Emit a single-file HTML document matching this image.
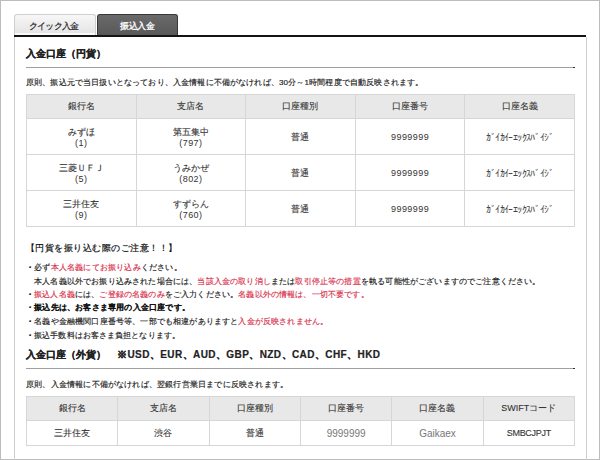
<!DOCTYPE html>
<html lang="ja">
<head>
<meta charset="utf-8">
<style>
html,body{margin:0;padding:0;}
body{width:600px;height:460px;position:relative;overflow:hidden;background:#fff;font-family:"Liberation Sans",sans-serif;color:#333;}
.frame{position:absolute;left:0;top:0;width:598px;height:458px;border:1px solid #bdbdbd;}
.abs{position:absolute;white-space:nowrap;}
.tab{position:absolute;top:14px;height:21px;border-radius:3px 3px 0 0;box-sizing:border-box;text-align:center;font-size:8px;line-height:22px;}
.tab1{left:14px;width:82px;border:1px solid #cfcfcf;border-bottom:none;background:linear-gradient(#f7f7f7,#e3e3e3);color:#222;font-size:9px;letter-spacing:-0.75px;-webkit-text-stroke-width:0.15px;padding-right:3px;box-shadow:inset 0 -2px 0 #f9f9f9;}
.tab2{left:97px;width:81px;border:1px solid #383838;border-bottom:none;background:linear-gradient(#6a6a6a,#585858);color:#fff;font-size:9px;letter-spacing:-0.4px;-webkit-text-stroke-width:0.3px;}
.topline{position:absolute;left:14px;top:35px;width:572px;height:2px;background:#141414;}
.box{position:absolute;left:14px;top:37px;width:571px;height:430px;border-left:1px solid #cfcfcf;border-right:1px solid #cfcfcf;}
h2{-webkit-text-stroke-width:0.2px;position:absolute;margin:0;font-size:10px;font-weight:bold;color:#222;line-height:12px;white-space:nowrap;}
.hr{position:absolute;left:26px;width:549px;height:1px;background:#a0a0a0;}
.txt{-webkit-text-stroke-width:0.15px;position:absolute;font-size:8px;line-height:12px;white-space:nowrap;color:#1a1a1a;letter-spacing:0.2px;}
table{position:absolute;left:26px;width:549px;border-collapse:collapse;table-layout:fixed;font-size:9px;}
.n{font-size:9px;letter-spacing:0.45px;-webkit-text-stroke-width:0;}
.l2{padding-top:2px;}
td,th{-webkit-text-stroke-width:0.1px;border:1px solid #d6d6d6;text-align:center;font-weight:normal;padding:0;line-height:11px;color:#333;}
th{background:#e8e8e8;}
td.kk{color:#444;-webkit-text-stroke-width:0;font-size:10px;letter-spacing:-0.6px;padding-top:1px;}
.b{-webkit-text-stroke-width:0.6px;color:#111;}
.red{color:#d8304c;}
.gray{color:#777;}
</style>
</head>
<body>
<div class="frame"></div>
<div class="tab tab1">クイック入金</div>
<div class="tab tab2">振込入金</div>
<div class="box"></div>
<div class="topline"></div>

<h2 style="left:26px;top:48px;">入金口座（円貨）</h2>
<div class="hr" style="top:67px;"></div>
<div class="abs" style="left:573px;top:67px;width:2px;height:1px;background:#333;"></div>
<div class="txt" style="left:26px;top:77px;letter-spacing:0.16px;">原則、振込元で当日扱いとなっており、入金情報に不備がなければ、30分～1時間程度で自動反映されます。</div>

<table style="top:94px;">
<tr style="height:24px;"><th>銀行名</th><th>支店名</th><th>口座種別</th><th>口座番号</th><th>口座名義</th></tr>
<tr style="height:36px;"><td class="l2">みずほ<br><span class="n">(1)</span></td><td class="l2">第五集中<br><span class="n">(797)</span></td><td style="padding-top:1px">普通</td><td class="n" style="padding-top:1px">9999999</td><td class="kk">ｶﾞｲｶｲｰｴｯｸｽﾊﾞｲｼﾞ</td></tr>
<tr style="height:36px;"><td class="l2">三菱ＵＦＪ<br><span class="n">(5)</span></td><td class="l2">うみかぜ<br><span class="n">(802)</span></td><td style="padding-top:1px">普通</td><td class="n" style="padding-top:1px">9999999</td><td class="kk">ｶﾞｲｶｲｰｴｯｸｽﾊﾞｲｼﾞ</td></tr>
<tr style="height:36px;"><td class="l2">三井住友<br><span class="n">(9)</span></td><td class="l2">すずらん<br><span class="n">(760)</span></td><td style="padding-top:1px">普通</td><td class="n" style="padding-top:1px">9999999</td><td class="kk">ｶﾞｲｶｲｰｴｯｸｽﾊﾞｲｼﾞ</td></tr>
</table>

<div class="txt" style="left:26px;top:242px;color:#111;font-size:9px;letter-spacing:0.48px;-webkit-text-stroke-width:0.2px;">【円貨を振り込む際のご注意！！】</div>
<div class="txt" style="left:26px;top:262px;"><span class="b">・</span>必ず<span class="red">本人名義にてお振り込み</span>ください。</div>
<div class="txt" style="left:34px;top:276px;letter-spacing:0.17px;">本人名義以外でお振り込みされた場合には、<span class="red">当該入金の取り消し</span>または<span class="red">取引停止等の措置</span>を執る可能性がございますのでご注意ください。</div>
<div class="txt" style="left:26px;top:289px;letter-spacing:0.16px;"><span class="b">・</span><span class="red">振込人名義</span>には、<span class="red">ご登録の名義のみ</span>をご入力ください。<span class="red">名義以外の情報は、一切不要です。</span></div>
<div class="txt" style="left:26px;top:302px;color:#111;-webkit-text-stroke-width:0.5px;"><span class="b">・</span>振込先は、お客さま専用の入金口座です。</div>
<div class="txt" style="left:26px;top:316px;letter-spacing:0.17px;"><span class="b">・</span>名義や金融機関口座番号等、一部でも相違がありますと<span class="red">入金が反映されません。</span></div>
<div class="txt" style="left:26px;top:330px;letter-spacing:0.1px;"><span class="b">・</span>振込手数料はお客さま負担となります。</div>

<h2 style="left:26px;top:349px;">入金口座（外貨）</h2>
<h2 style="left:117px;top:349px;letter-spacing:0.42px;">※USD、EUR、AUD、GBP、NZD、CAD、CHF、HKD</h2>
<div class="hr" style="top:368px;"></div>
<div class="abs" style="left:573px;top:368px;width:2px;height:1px;background:#333;"></div>
<div class="txt" style="left:26px;top:379px;letter-spacing:0.19px;">原則、入金情報に不備がなければ、翌銀行営業日までに反映されます。</div>

<table style="top:396px;">
<tr style="height:24px;"><th>銀行名</th><th>支店名</th><th>口座種別</th><th>口座番号</th><th>口座名義</th><th>SWIFTコード</th></tr>
<tr style="height:25px;"><td>三井住友</td><td>渋谷</td><td>普通</td><td class="gray" style="font-size:10px;-webkit-text-stroke-width:0;">9999999</td><td class="gray" style="font-size:10px;-webkit-text-stroke-width:0;">Gaikaex</td><td style="letter-spacing:-0.3px;">SMBCJPJT</td></tr>
</table>
</body>
</html>
